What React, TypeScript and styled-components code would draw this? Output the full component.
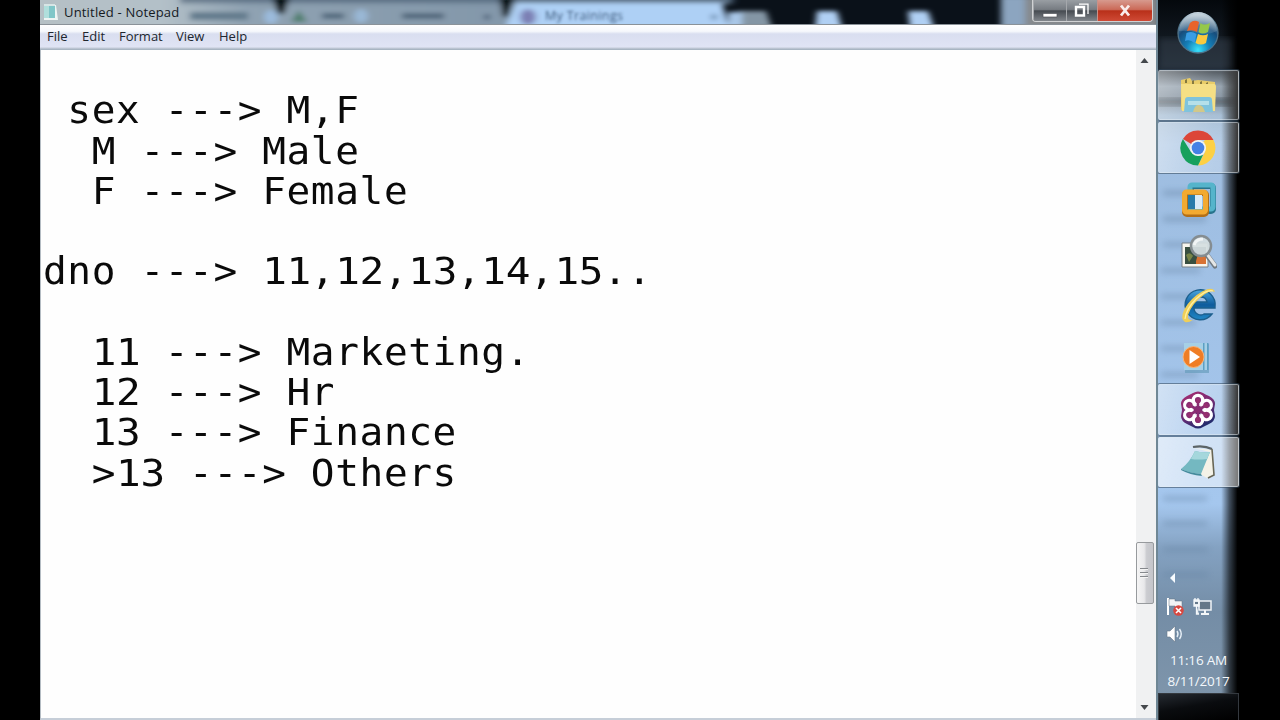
import React from 'react';
import styled, { createGlobalStyle } from 'styled-components';

const GlobalStyle = createGlobalStyle`
  * { box-sizing: border-box; }
  body { margin: 0; background: #000; overflow: hidden; }
`;

const Desktop = styled.div`
  display: flex;
  width: 1280px;
  height: 720px;
  padding: 0 40px;
  background: #000;
  font-family: 'Open Sans', 'Noto Sans', sans-serif;
`;

const NotepadWindow = styled.div`
  display: flex;
  flex-direction: column;
  width: 1118px;
  border-right: 2px solid #6f8795;
  background: #fff;
`;

const TitleBar = styled.header`
  position: relative;
  display: flex;
  align-items: center;
  height: 25px;
  padding-left: 3px;
  overflow: hidden;
  background: #0a1119;
  border-bottom: 1px solid #8a9299;
`;

const GlassBackdrop = styled.svg`
  position: absolute;
  inset: 0;
`;

const TitleIcon = styled.svg`
  position: relative;
  width: 16px;
  height: 18px;
`;

const TitleText = styled.h1`
  position: relative;
  flex: 1;
  margin: 0 0 0 5px;
  font-size: 13px;
  line-height: 24px;
  font-weight: 400;
  letter-spacing: 0.18px;
  color: #14191e;
`;

const Controls = styled.div`
  position: relative;
  display: flex;
  align-self: flex-start;
  height: 22px;
  margin-right: 3px;
  border: 1px solid #d0d2d4;
  border-top: 0;
  border-radius: 0 0 4px 4px;
  overflow: hidden;
`;

const ControlButton = styled.button<{ $width: number; $close?: boolean }>`
  display: flex;
  align-items: center;
  justify-content: center;
  width: ${(p) => p.$width}px;
  height: 21px;
  padding: 0;
  border: 0;
  border-left: 1px solid ${(p) => (p.$close ? '#c99189' : '#a5a8ac')};
  background: ${(p) =>
    p.$close
      ? 'linear-gradient(#d79a8e 0, #cb6a58 45%, #b9301a 52%, #cf4a35 100%)'
      : 'linear-gradient(#999ea3 0, #777c82 45%, #464b51 52%, #81868c 100%)'};
`;

const MenuBar = styled.nav`
  display: flex;
  align-items: flex-start;
  gap: 13px;
  height: 25px;
  padding-left: 7px;
  background: linear-gradient(#fff 0, #f6f8fc 25%, #d9def0 36%, #e0e4f4 88%, #c3cbd8 92%, #9faebb 100%);
`;

const MenuItem = styled.span<{ $width: number }>`
  width: ${(p) => p.$width}px;
  font-size: 13px;
  line-height: 23px;
  white-space: nowrap;
  color: #20262e;
`;

const EditorRow = styled.div`
  display: flex;
  flex: 1;
  min-height: 0;
  border-left: 1px solid #b4bcc3;
  border-bottom: 2px solid #c6ced8;
`;

const Editor = styled.main`
  flex: 1;
  padding: 1px 0 0 1.5px;
  background: #fefefe;
`;

const Line = styled.div`
  width: fit-content;
  height: 40.25px;
  font-family: 'DejaVu Sans Mono', monospace;
  font-size: 36.5px;
  line-height: 40.25px;
  letter-spacing: 0.57px;
  white-space: pre;
  color: #0a0a0a;
  transform: scaleX(1.08);
  transform-origin: left center;
`;

const Digits = styled.span`
  font-size: 38px;
  line-height: 0;
  letter-spacing: -0.33px;
`;

const ScrollBar = styled.div`
  display: flex;
  flex-direction: column;
  align-items: center;
  width: 20px;
  padding: 7px 2px 7px 0;
  background: #f0f1f2;
`;

const ScrollArrow = styled.svg`
  width: 9px;
  height: 7px;
  margin-right: 2px;
`;

const ScrollTrack = styled.div`
  display: flex;
  flex-direction: column;
  flex: 1;
  width: 100%;
  padding-top: 478px;
`;

const ScrollThumb = styled.div`
  display: flex;
  flex-direction: column;
  align-items: center;
  justify-content: center;
  gap: 2px;
  height: 62px;
  padding-right: 2px;
  border: 1px solid #979a9d;
  border-radius: 2px;
  background: linear-gradient(90deg, #f5f5f5 0, #e8e8ea 45%, #cbccd0 60%, #c4c5ca 100%);
`;

const Grip = styled.i`
  width: 8px;
  height: 2px;
  background: #85888c;
  border-bottom: 1px solid #f3f3f3;
`;

const Taskbar = styled.aside`
  position: relative;
  display: flex;
  flex-direction: column;
  width: 82px;
  overflow: hidden;
  background: #000;
`;

const TaskbarContent = styled.div`
  position: relative;
  display: flex;
  flex-direction: column;
  height: 720px;
`;

const StartButton = styled.div`
  display: flex;
  justify-content: center;
  height: 70px;
  padding-top: 11px;
  padding-right: 2px;
`;

const TaskItem = styled.div<{ $active?: 'open' | 'focused' }>`
  display: flex;
  align-items: center;
  justify-content: center;
  width: 81px;
  height: 50.4px;
  margin-bottom: 2px;
  padding-right: 2px;
  border: 1px solid transparent;
  border-radius: 2px;
  ${(p) =>
    p.$active &&
    `
    border-color: rgba(225, 235, 243, 0.5);
    box-shadow: 0 0 0 1px rgba(50, 70, 90, 0.55);
    background: ${
      p.$active === 'focused'
        ? 'linear-gradient(105deg, rgba(255,255,255,0.65), rgba(255,255,255,0.5) 60%, rgba(255,255,255,0.48))'
        : 'linear-gradient(105deg, rgba(255,255,255,0.5), rgba(255,255,255,0.28) 60%, rgba(255,255,255,0.2))'
    };
  `}
`;

const Tray = styled.div`
  display: flex;
  flex-direction: column;
  flex: 1;
  padding-top: 82px;
`;

const TrayRow = styled.div<{ $height: number }>`
  display: flex;
  align-items: center;
  gap: 9px;
  height: ${(p) => p.$height}px;
  padding-left: 8px;
`;

const Clock = styled.div`
  display: flex;
  flex-direction: column;
  align-items: center;
  width: 81px;
  margin-top: 11px;
  font-size: 13.5px;
  line-height: 20.5px;
  letter-spacing: -0.2px;
  color: #f4f8fc;
`;

const ShowDesktop = styled.div`
  width: 81px;
  height: 27px;
  margin-top: auto;
  border: 1px solid #34393f;
  border-bottom: 0;
  background: linear-gradient(170deg, #252a31 0, #0a0c0f 45%, #000 100%);
`;

const Backdrop = () => (
  <GlassBackdrop width="1116" height="24" viewBox="40 0 1116 24">
    <defs>
      <linearGradient id="glass" x1="0" x2="1" y1="0" y2="0">
        <stop offset="0" stopColor="#b6c0c5" />
        <stop offset=".2" stopColor="#b3c0c8" />
        <stop offset=".32" stopColor="#8fa2b2" />
        <stop offset="1" stopColor="#788ea3" />
      </linearGradient>
      <linearGradient id="topShade" x1="0" x2="0" y1="0" y2="1">
        <stop offset="0" stopColor="#3c5167" />
        <stop offset="1" stopColor="#54697f" stopOpacity="0" />
      </linearGradient>
      <filter id="soft" x="-20%" y="-40%" width="140%" height="180%">
        <feGaussianBlur stdDeviation="3 2.2" />
      </filter>
      <filter id="softText" x="-20%" y="-40%" width="140%" height="180%">
        <feGaussianBlur stdDeviation="1.5" />
      </filter>
    </defs>
    <rect x="40" width="1116" height="24" fill="#0a1119" />
    <g filter="url(#soft)">
      <path d="M20-5H730V4H722L729 30H20Z" fill="url(#glass)" />
      <path d="M180-3H735V6H180Z" fill="url(#topShade)" />
      <path d="M516 3H722L729 28H505Z" fill="#aed0f5" />
      <path d="M272-4H290L284 14H278Z" fill="#05090d" />
      <path d="M499-4H515L508 17H503Z" fill="#05090d" />
      <path d="M738 11H766L772 28H740Z" fill="#8496a5" />
      <path d="M728 12H742V28H728Z" fill="#a9c7e8" />
      <path d="M817 11H837L842 28H815Z" fill="#b0d0f4" />
      <path d="M908 11H928L934 28H910Z" fill="#b0d0f4" />
      <path d="M1001-4H1025V28H1001Z" fill="#8ca5c0" />
      <path d="M1025-4H1160V30H1025Z" fill="#85898d" />
      <path d="M190 12H248V20H190Z" fill="#647b8d" />
      <circle cx="271" cy="17" r="7" fill="#9bbbdd" />
      <path d="M299 10L307 22H291Z" fill="#4d7e6c" />
      <path d="M322 13H344V19H322Z" fill="#536a7e" />
      <circle cx="361" cy="16" r="7" fill="#9ab8d6" />
      <path d="M402 13H444V19H402Z" fill="#52697d" />
      <circle cx="487" cy="17" r="3" fill="#4e6278" />
      <circle cx="528" cy="17" r="8" fill="#7b7fb4" />
      <circle cx="714" cy="17" r="3" fill="#6d8caf" />
    </g>
    <text x="545" y="20" fontSize="12.5" textLength="78" fill="#3c5a7c" filter="url(#softText)">
      My Trainings
    </text>
  </GlassBackdrop>
);

const SidebarBackdrop = () => (
  <GlassBackdrop width="82" height="720" viewBox="0 0 82 720">
    <defs>
      <linearGradient id="side" x1="0" x2="0" y1="0" y2="1">
        <stop offset="0" stopColor="#04080c" />
        <stop offset=".1" stopColor="#1c2630" />
        <stop offset=".12" stopColor="#768797" />
        <stop offset=".14" stopColor="#5f7081" />
        <stop offset=".16" stopColor="#8dabc8" />
        <stop offset=".2" stopColor="#9ebde0" />
        <stop offset=".7" stopColor="#a5c7ee" />
        <stop offset=".76" stopColor="#84a2c2" />
        <stop offset=".85" stopColor="#748da6" />
        <stop offset="1" stopColor="#8197ac" />
      </linearGradient>
      <linearGradient id="sideFade" x1="0" x2="1" y1="0" y2="0">
        <stop offset=".77" stopColor="#000" stopOpacity="0" />
        <stop offset=".87" stopColor="#000" stopOpacity=".6" />
        <stop offset=".97" stopColor="#000" />
      </linearGradient>
      <filter id="smudge" x="-30%" y="-5%" width="160%" height="110%">
        <feGaussianBlur stdDeviation="3" />
      </filter>
    </defs>
    <rect width="82" height="720" fill="url(#side)" />
    <path d="M-5 98H75V106H-5Z" fill="#17222e" opacity=".7" filter="url(#smudge)" />
    <g filter="url(#smudge)" fill="#6481a0" opacity=".42">
      <path d="M5 190H45V196H5ZM5 216H48V222H5ZM5 242H42V247H5ZM3 268H42V273H3ZM3 294H40V299H3ZM3 320H38V325H3ZM3 346H38V351H3ZM3 372H40V377H3Z" />
      <path d="M5 496H49V501H5ZM5 521H49V526H5ZM5 547H50V552H5ZM5 572H50V577H5Z" />
    </g>
    <rect width="82" height="720" fill="url(#sideFade)" />
    <path d="M1 38H74V70H1Z" fill="#3c4a56" opacity=".45" filter="url(#smudge)" />
  </GlassBackdrop>
);

const StartOrb = () => (
  <svg width="44" height="44" viewBox="0 0 44 44">
    <defs>
      <radialGradient id="orb" cx=".5" cy=".92" r=".85">
        <stop offset="0" stopColor="#3ae2fa" />
        <stop offset=".35" stopColor="#1580b8" />
        <stop offset=".7" stopColor="#174d7c" />
        <stop offset="1" stopColor="#889cac" />
      </radialGradient>
      <linearGradient id="orbShine" x1="0" x2="0" y1="0" y2="1">
        <stop offset="0" stopColor="#dce7ee" stopOpacity=".85" />
        <stop offset="1" stopColor="#9fb6c6" stopOpacity=".15" />
      </linearGradient>
    </defs>
    <circle cx="22" cy="22" r="20" fill="url(#orb)" stroke="#4f7389" strokeWidth="1.3" />
    <path d="M3 20A19 19 0 0 1 41 20Q31 25 22 22T3 20Z" fill="url(#orbShine)" />
    <path d="M14 12Q18 8 23 11L21 21Q16 18 11 20Z" fill="#e8632b" />
    <path d="M24.500 12Q28 15 34 12L32 21Q26 24 22.500 21Z" fill="#95c84a" />
    <path d="M10.500 22Q16 19.500 20.500 23L18.500 32Q14 28 9 30Z" fill="#3a9de4" />
    <path d="M22 23Q27 25.500 32 23L30 32Q25 35 19.500 32Z" fill="#fbc93e" />
  </svg>
);

const ExplorerIcon = () => (
  <svg width="40" height="40" viewBox="0 0 40 40">
    <path d="M3 5L12 3 14 6 20 5 37 7V35H3Z" fill="#e9cd69" />
    <path d="M7 5L9 4V8H7ZM14 6L16 5V9H14ZM22 7L24 6V10H22ZM28 8L30 7V10H28Z" fill="#857940" />
    <path d="M3 9H36Q38 9 38 12L37 36H4Z" fill="#f5df85" />
    <path d="M7 25Q7 22 10 22H31Q34 22 34 25L35 37H6Z" fill="#7fc3dd" />
    <path d="M10 26H31V30H10Z" fill="#b5e0ea" />
    <path d="M15 37Q17 29 21 30Q25 30 27 37Z" fill="#d2c889" />
  </svg>
);

const ChromeIcon = () => (
  <svg width="36" height="36" viewBox="0 0 36 36">
    <path d="M18 18L2.900 9A17.500 17.500 0 0 1 33.500 10H18Z" fill="#dc4638" />
    <path d="M18 18L25 10H33.500A17.500 17.500 0 0 1 18 35.500L25 22Z" fill="#fcd044" />
    <path d="M2.900 9L11 22 18 26 23 25 18 35.500A17.500 17.500 0 0 1 2.900 9Z" fill="#16a05d" />
    <circle cx="18" cy="18" r="8" fill="#f1f4f4" />
    <circle cx="18" cy="18" r="6.300" fill="#4581e5" />
  </svg>
);

const VmwareIcon = () => (
  <svg width="38" height="38" viewBox="0 0 38 38">
    <rect x="12" y="5" width="22" height="25" rx="2" fill="none" stroke="#28748c" strokeWidth="6" />
    <rect x="11" y="4" width="23" height="24" rx="2" fill="none" stroke="#55b4cb" strokeWidth="5" />
    <rect x="6" y="12" width="21" height="21" rx="2" fill="none" stroke="#b36f17" strokeWidth="6" />
    <rect x="5.500" y="11" width="21" height="20" rx="2" fill="none" stroke="#f3aa31" strokeWidth="5" />
    <path d="M9 14H16V28H9Z" fill="#287ba9" />
    <path d="M16 14H23V28H16Z" fill="#d9ebf7" />
  </svg>
);

const MagnifierIcon = () => (
  <svg width="38" height="38" viewBox="0 0 38 38">
    <path d="M3 10H29V34H3Z" fill="#f7f5ed" stroke="#768087" />
    <path d="M6 14H27V31H6Z" fill="#394f40" />
    <path d="M17 28L19 21 23 24 27 22V31H17Z" fill="#d77234" />
    <path d="M7 22Q11 18 14 23L10 29Z" fill="#778447" />
    <path d="M28 22L36 33" stroke="#707980" strokeWidth="5" strokeLinecap="round" />
    <path d="M28 21L36 32" stroke="#e4e6e6" strokeWidth="3" strokeLinecap="round" />
    <circle cx="22" cy="13" r="10" fill="#d4dee0" fillOpacity=".94" stroke="#858d91" strokeWidth="2.500" />
    <path d="M15 12Q17 6 24 6" fill="none" stroke="#fff" strokeWidth="3" opacity=".7" />
  </svg>
);

const ExplorerBrowserIcon = () => (
  <svg width="38" height="38" viewBox="0 0 38 38">
    <defs>
      <linearGradient id="ieBlue" x1="0" x2="0" y1="0" y2="1">
        <stop offset="0" stopColor="#4aa6df" />
        <stop offset=".5" stopColor="#0f5c9c" />
        <stop offset="1" stopColor="#2187c6" />
      </linearGradient>
    </defs>
    <path
      d="M36 21A15 15 0 1 0 33 28H25Q22 30 18.500 28Q15 26 15 22H36ZM15 16Q17 11 22 11T28 16Z"
      fill="url(#ieBlue)"
      fillRule="evenodd"
      stroke="#1c5f8d"
      strokeWidth="1.400"
    />
    <path d="M36 6Q34 0 24 5Q11 12 5 24Q1 33 6 36Q9 37 14 34Q8 35 9 29Q13 17 26 8Q32 4 36 6Z" fill="#efcf59" />
    <path d="M34 5Q28 3 17 13Q7 23 6 33" fill="none" stroke="#fff0a2" strokeWidth="1.200" />
  </svg>
);

const MediaPlayerIcon = () => (
  <svg width="36" height="36" viewBox="0 0 36 36">
    <path d="M5 5H29V34H5Z" fill="#5f97b6" opacity=".6" />
    <path d="M4 4H28V31H4Z" fill="#a6d0e6" />
    <path d="M23 4H24.500V31H23ZM27 4H28.500V31H27Z" fill="#5d9fc4" />
    <circle cx="13.500" cy="18" r="10.500" fill="#ef7d25" stroke="#f8b47a" />
    <path d="M9.500 11L20 18 9.500 25Z" fill="#fff" />
  </svg>
);

const MeetingIcon = () => (
  <svg width="36" height="38" viewBox="0 0 36 38">
    <defs>
      <linearGradient id="flower" x1="0" x2=".5" y1="0" y2="1">
        <stop offset="0" stopColor="#ad2d70" />
        <stop offset=".55" stopColor="#752b74" />
        <stop offset="1" stopColor="#252b6d" />
      </linearGradient>
    </defs>
    <path
      d="M13 2Q18-1 23 2Q26 4 29 5Q35 8 35 13L34 19 35 25Q35 30 29 33L23 36Q18 39 13 36L7 33Q1 30 1 25L2 19 1 13Q1 8 7 5Z"
      fill="url(#flower)"
    />
    {[0, 60, 120, 180, 240, 300].map((angle) => (
      <g key={angle} transform={`rotate(${angle} 18 19)`}>
        <circle cx="18" cy="9" r="4.700" fill="#8b2e73" stroke="#fff" strokeWidth="3.200" />
        <path d="M18 9V18" stroke="#8b2e73" strokeWidth="2.600" />
        <circle cx="18" cy="10" r="2.200" fill="#97306f" />
      </g>
    ))}
    <circle cx="18" cy="19" r="3" fill="#8b2e73" />
  </svg>
);

const NotesIcon = () => (
  <svg width="36" height="36" viewBox="0 0 36 36">
    <path d="M14 4L32 6 34 31 27 34 20 30 30 8Z" fill="#f4f2e7" />
    <path d="M13 3Q24 1 32 5" fill="none" stroke="#5c6466" strokeWidth="2.200" />
    <path d="M32 5L34 31 28 34" fill="none" stroke="#686655" strokeWidth="1.600" />
    <path d="M15 7Q22 9 30 8L21 30Q9 29 1 25Q10 18 15 7Z" fill="#74b8c1" />
    <path d="M15 7Q22 9 30 8L27 15Q18 16 11 15Z" fill="#a5d7dc" />
    <path d="M1 25Q10 29 21 30L22 32Q10 31 1 26Z" fill="#458b9c" />
  </svg>
);

const NoteLine = ({ text }: { text: string }) => (
  <Line>
    {text.split(/(\d+)/).map((part, i) => (i % 2 ? <Digits key={i}>{part}</Digits> : part))}
  </Line>
);

const noteLines = [
  '',
  ' sex ---> M,F',
  '  M ---> Male',
  '  F ---> Female',
  '',
  'dno ---> 11,12,13,14,15..',
  '',
  '  11 ---> Marketing.',
  '  12 ---> Hr',
  '  13 ---> Finance',
  '  >13 ---> Others',
];

export default function App() {
  return (
    <>
      <GlobalStyle />
      <Desktop>
        <NotepadWindow>
          <TitleBar>
            <Backdrop />
            <TitleIcon viewBox="0 0 16 18">
              <path d="M1 2H13L15 17H1Z" fill="#eef4f3" />
              <path d="M1 3H12V15H1Z" fill="#80c6c8" />
              <path d="M1 3H6V15H1Z" fill="#b0dfdc" />
              <path d="M1 1H12V3H1Z" fill="#d7e5e5" />
            </TitleIcon>
            <TitleText>Untitled - Notepad</TitleText>
            <Controls>
              <ControlButton $width={33} aria-label="Minimize">
                <svg width="18" height="16" viewBox="0 0 18 16">
                  <path d="M2 10.500H16V14H2Z" fill="#fff" stroke="#51555a" strokeWidth=".7" />
                </svg>
              </ControlButton>
              <ControlButton $width={31} aria-label="Restore">
                <svg width="18" height="16" viewBox="0 0 18 16">
                  <path d="M3 4H11V12.500H3Z" fill="none" stroke="#fff" strokeWidth="2.400" />
                  <path d="M6 1.200H15V11" fill="none" stroke="#fff" strokeWidth="1.300" />
                </svg>
              </ControlButton>
              <ControlButton $width={55} $close aria-label="Close">
                <svg width="18" height="16" viewBox="0 0 18 16">
                  <path d="M5 2.500L13 12.500M13 2.500L5 12.500" stroke="#f9ecea" strokeWidth="2.800" />
                </svg>
              </ControlButton>
            </Controls>
          </TitleBar>
          <MenuBar>
            <MenuItem $width={22}>File</MenuItem>
            <MenuItem $width={24}>Edit</MenuItem>
            <MenuItem $width={44}>Format</MenuItem>
            <MenuItem $width={30}>View</MenuItem>
            <MenuItem $width={30}>Help</MenuItem>
          </MenuBar>
          <EditorRow>
            <Editor>
              {noteLines.map((text, i) => (
                <NoteLine key={i} text={text} />
              ))}
            </Editor>
            <ScrollBar>
              <ScrollArrow viewBox="0 0 9 7">
                <path d="M0.500 6L4.500 1 8.500 6Z" fill="#44484c" />
              </ScrollArrow>
              <ScrollTrack>
                <ScrollThumb>
                  <Grip />
                  <Grip />
                  <Grip />
                </ScrollThumb>
              </ScrollTrack>
              <ScrollArrow viewBox="0 0 9 7">
                <path d="M0.500 1L4.500 6 8.500 1Z" fill="#44484c" />
              </ScrollArrow>
            </ScrollBar>
          </EditorRow>
        </NotepadWindow>
        <Taskbar>
          <SidebarBackdrop />
          <TaskbarContent>
            <StartButton>
              <StartOrb />
            </StartButton>
            <TaskItem $active="open">
              <ExplorerIcon />
            </TaskItem>
            <TaskItem $active="open">
              <ChromeIcon />
            </TaskItem>
            <TaskItem>
              <VmwareIcon />
            </TaskItem>
            <TaskItem>
              <MagnifierIcon />
            </TaskItem>
            <TaskItem>
              <ExplorerBrowserIcon />
            </TaskItem>
            <TaskItem>
              <MediaPlayerIcon />
            </TaskItem>
            <TaskItem $active="open">
              <MeetingIcon />
            </TaskItem>
            <TaskItem $active="focused">
              <NotesIcon />
            </TaskItem>
            <Tray>
              <TrayRow $height={14}>
                <svg width="14" height="12" viewBox="0 0 14 12">
                  <path d="M9 1V11L4 6Z" fill="#f7fbff" />
                </svg>
              </TrayRow>
              <TrayRow $height={44}>
                <svg width="18" height="20" viewBox="0 0 18 20">
                  <path d="M2 1V18" stroke="#fff" strokeWidth="2" />
                  <path d="M3 2H9V4H16V11H9V9H3Z" fill="#f1f4f6" stroke="#607080" strokeWidth=".5" />
                  <circle cx="12.500" cy="13.500" r="5.200" fill="#d84841" />
                  <path d="M10 11L15 16M15 11L10 16" stroke="#fff" strokeWidth="1.600" />
                </svg>
                <svg width="20" height="20" viewBox="0 0 20 20">
                  <path d="M6 4H18V13H6Z" fill="#657788" stroke="#eff4f7" strokeWidth="1.500" />
                  <path d="M12 13V16M8 17H16" stroke="#f3f6f8" strokeWidth="2" />
                  <path d="M1 3H6V9H1ZM2 1V4M5 1V4M3.500 9V17H6" fill="#e6edf1" stroke="#f4f8fa" strokeWidth="1.300" />
                  <path d="M2 5H5V7H2Z" fill="#65798c" />
                </svg>
              </TrayRow>
              <TrayRow $height={10}>
                <svg width="20" height="18" viewBox="0 0 20 18">
                  <path d="M1 6H4L9 1V17L4 12H1Z" fill="#fff" stroke="#69798a" strokeWidth=".6" />
                  <path d="M11 6Q13 9 11 12M13.500 4Q17 9 13.500 14" fill="none" stroke="#e8f0f7" strokeWidth="1.400" />
                </svg>
              </TrayRow>
              <Clock>
                <span>11:16 AM</span>
                <span>8/11/2017</span>
              </Clock>
              <ShowDesktop />
            </Tray>
          </TaskbarContent>
        </Taskbar>
      </Desktop>
    </>
  );
}
